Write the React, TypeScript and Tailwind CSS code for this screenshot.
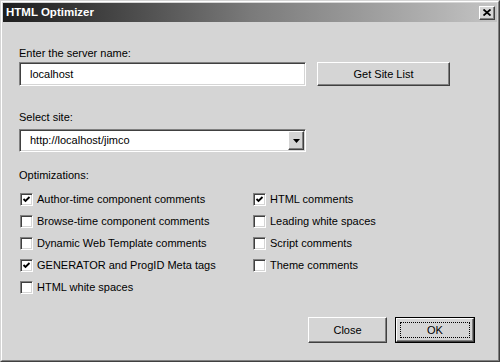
import React from 'react';

interface CheckProps {
  label: string;
  checked?: boolean;
}

const Check: React.FC<CheckProps> = ({ label, checked }) => (
  <label className="flex items-center h-[22px] gap-[4px]">
    <span className="w-[13px] h-[13px] bg-white border border-t-[#808080] border-l-[#808080] border-r-white border-b-white shadow-[inset_1px_1px_0_#404040,inset_-1px_-1px_0_#d5d5d5] flex items-center justify-center">
      {checked && (
        <svg width="9" height="9" viewBox="0 0 9 9">
          <polyline points="1.5,4 3.5,6 7.5,2" fill="none" stroke="#000" strokeWidth="1.8" />
        </svg>
      )}
    </span>
    <span>{label}</span>
  </label>
);

const btn =
  'flex items-center justify-center bg-[#d5d5d5] border border-t-white border-l-white border-r-[#404040] border-b-[#404040] shadow-[inset_-1px_-1px_0_#808080]';

const sunken =
  'bg-white border border-t-[#808080] border-l-[#808080] border-r-white border-b-white shadow-[inset_1px_1px_0_#404040,inset_-1px_-1px_0_#d5d5d5]';

export default function App() {
  return (
    <div className="w-[500px] h-[362px] bg-[#d5d5d5] border border-t-[#d5d5d5] border-l-[#d5d5d5] border-r-[#404040] border-b-[#404040] font-['Liberation_Sans',Arial,sans-serif] text-[11px] text-black">
      <div className="h-full flex flex-col border border-t-white border-l-white border-r-[#808080] border-b-[#808080] p-[1px]">
        {/* title bar */}
        <div className="h-[19px] flex items-center justify-between pl-[3px] pr-[2px] bg-gradient-to-r from-[#1e1e1e] via-[#7a7a7a] to-[#c4c4c4]">
          <span className="text-white font-bold text-[11.5px] leading-none">HTML Optimizer</span>
          <button className={`${btn} w-[16px] h-[14px]`}>
            <svg width="8" height="7" viewBox="0 0 8 7">
              <path d="M0.5 0.5 L7.5 6.5 M7.5 0.5 L0.5 6.5" stroke="#000" strokeWidth="1.8" />
            </svg>
          </button>
        </div>

        {/* body */}
        <div className="flex-1 flex flex-col pl-[16px] pr-[22px]">
          <div className="mt-[24px] leading-[15px]">Enter the server name:</div>
          <div className="flex items-center mt-[1px] gap-[11px]">
            <div className={`${sunken} w-[287px] h-[24px] flex items-center pl-[10px]`}>localhost</div>
            <button className={`${btn} w-[133px] h-[24px]`}>Get Site List</button>
          </div>

          <div className="mt-[24px] leading-[15px]">Select site:</div>
          <div className={`${sunken} mt-[4px] w-[287px] h-[23px] flex items-center justify-between pl-[10px] pr-[1px]`}>
            <span>http://localhost/jimco</span>
            <span className={`${btn} w-[16px] h-[19px]`}>
              <svg width="7" height="4" viewBox="0 0 7 4">
                <path d="M0 0 H7 L3.5 4 Z" fill="#000" />
              </svg>
            </span>
          </div>

          <div className="mt-[16px] leading-[15px]">Optimizations:</div>
          <div className="mt-[5px] flex pl-[1px]">
            <div className="w-[233px] flex flex-col">
              <Check label="Author-time component comments" checked />
              <Check label="Browse-time component comments" />
              <Check label="Dynamic Web Template comments" />
              <Check label="GENERATOR and ProgID Meta tags" checked />
              <Check label="HTML white spaces" />
            </div>
            <div className="flex flex-col">
              <Check label="HTML comments" checked />
              <Check label="Leading white spaces" />
              <Check label="Script comments" />
              <Check label="Theme comments" />
            </div>
          </div>

          <div className="mt-[19px] flex justify-end gap-[8px]">
            <button className={`${btn} w-[79px] h-[26px]`}>Close</button>
            <button className="w-[80px] h-[26px] border border-black">
              <span className={`${btn} w-full h-full p-[3px]`}>
                <span className="w-full h-full flex items-center justify-center border border-dotted border-black">
                  OK
                </span>
              </span>
            </button>
          </div>
        </div>
      </div>
    </div>
  );
}
